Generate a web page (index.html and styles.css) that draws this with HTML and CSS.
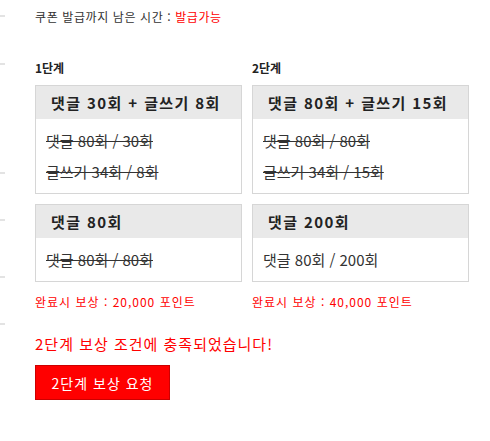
FILE: index.html
```html
<!DOCTYPE html>
<html lang="ko">
<head>
<meta charset="utf-8">
<link rel="stylesheet" href="styles.css">
</head>
<body>
<div class="page">
  <div class="ticks">
    <span class="tick t1"></span>
    <span class="tick t2"></span>
    <span class="tick t3"></span>
    <span class="tick t4"></span>
    <span class="tick t5"></span>
    <span class="tick t6"></span>
  </div>
  <div class="content">
    <p class="timer">쿠폰 발급까지 남은 시간 : <span class="red">발급가능</span></p>
    <div class="stages">
      <div class="label">1단계</div>
      <div class="label">2단계</div>

      <div class="box">
        <div class="box-head">댓글 30회 + 글쓰기 8회</div>
        <div class="box-body">
          <div class="row done">댓글 80회 / 30회</div>
          <div class="row done">글쓰기 34회 / 8회</div>
        </div>
      </div>
      <div class="box">
        <div class="box-head">댓글 80회 + 글쓰기 15회</div>
        <div class="box-body">
          <div class="row done">댓글 80회 / 80회</div>
          <div class="row done">글쓰기 34회 / 15회</div>
        </div>
      </div>

      <div class="box">
        <div class="box-head">댓글 80회</div>
        <div class="box-body">
          <div class="row done">댓글 80회 / 80회</div>
        </div>
      </div>
      <div class="box">
        <div class="box-head">댓글 200회</div>
        <div class="box-body">
          <div class="row">댓글 80회 / 200회</div>
        </div>
      </div>

      <div class="reward">완료시 보상 : 20,000 포인트</div>
      <div class="reward">완료시 보상 : 40,000 포인트</div>
    </div>
    <p class="notice">2단계 보상 조건에 충족되었습니다!</p>
    <button class="request">2단계 보상 요청</button>
  </div>
</div>
</body>
</html>
```
FILE: styles.css
```css
html, body {
  margin: 0;
  padding: 0;
  background: #fff;
}
body {
  font-family: "Noto Sans CJK KR", "Noto Sans", sans-serif;
  color: #333;
}
.page {
  display: flex;
  width: 490px;
  min-height: 441px;
}
.ticks {
  width: 5px;
  display: flex;
  flex-direction: column;
}
.tick {
  display: block;
  width: 5px;
  height: 2px;
  background: #e3e3e3;
}
.t1 { margin-top: 15px; }
.t2 { margin-top: 46px; }
.t3 { margin-top: 107px; }
.t4 { margin-top: 45px; }
.t5 { margin-top: 55px; }
.t6 { margin-top: 45px; }

.content {
  margin-left: 30px;
}
.timer {
  margin: 9px 0 0;
  font-size: 12px;
  line-height: 16px;
  color: #333;
  letter-spacing: 0.6px;
}
.red { color: #ff0000; }

.stages {
  margin-top: 35px;
  display: grid;
  grid-template-columns: 207px 217px;
  column-gap: 10px;
}
.label {
  font-size: 12px;
  font-weight: bold;
  line-height: 16px;
  color: #222;
  margin-bottom: 9px;
}
.box {
  border: 1px solid #d6d6d6;
  margin-bottom: 10px;
}
.box-head {
  background: #e9e9e9;
  height: 33px;
  line-height: 33px;
  padding-left: 15px;
  font-size: 15px;
  font-weight: bold;
  color: #222;
  letter-spacing: 1.4px;
  white-space: nowrap;
}
.box-body {
  padding: 6px 10px 6px;
}
.row {
  font-size: 15px;
  line-height: 31px;
  color: #333;
  white-space: nowrap;
}
.done {
  text-decoration: line-through;
}
.reward {
  margin-top: 2px;
  font-size: 12px;
  line-height: 16px;
  color: #ff0000;
  letter-spacing: 1px;
}
.notice {
  margin: 25px 0 0;
  font-size: 15px;
  line-height: 18px;
  color: #ff0000;
  letter-spacing: 1px;
}
.request {
  margin-top: 12px;
  width: 135px;
  height: 35px;
  background: #ff0000;
  border: 1px solid #cc0000;
  color: #fff;
  font-family: "Noto Sans CJK KR", "Noto Sans", sans-serif;
  font-size: 14px;
  letter-spacing: 1px;
  padding: 0;
  cursor: pointer;
}
```
